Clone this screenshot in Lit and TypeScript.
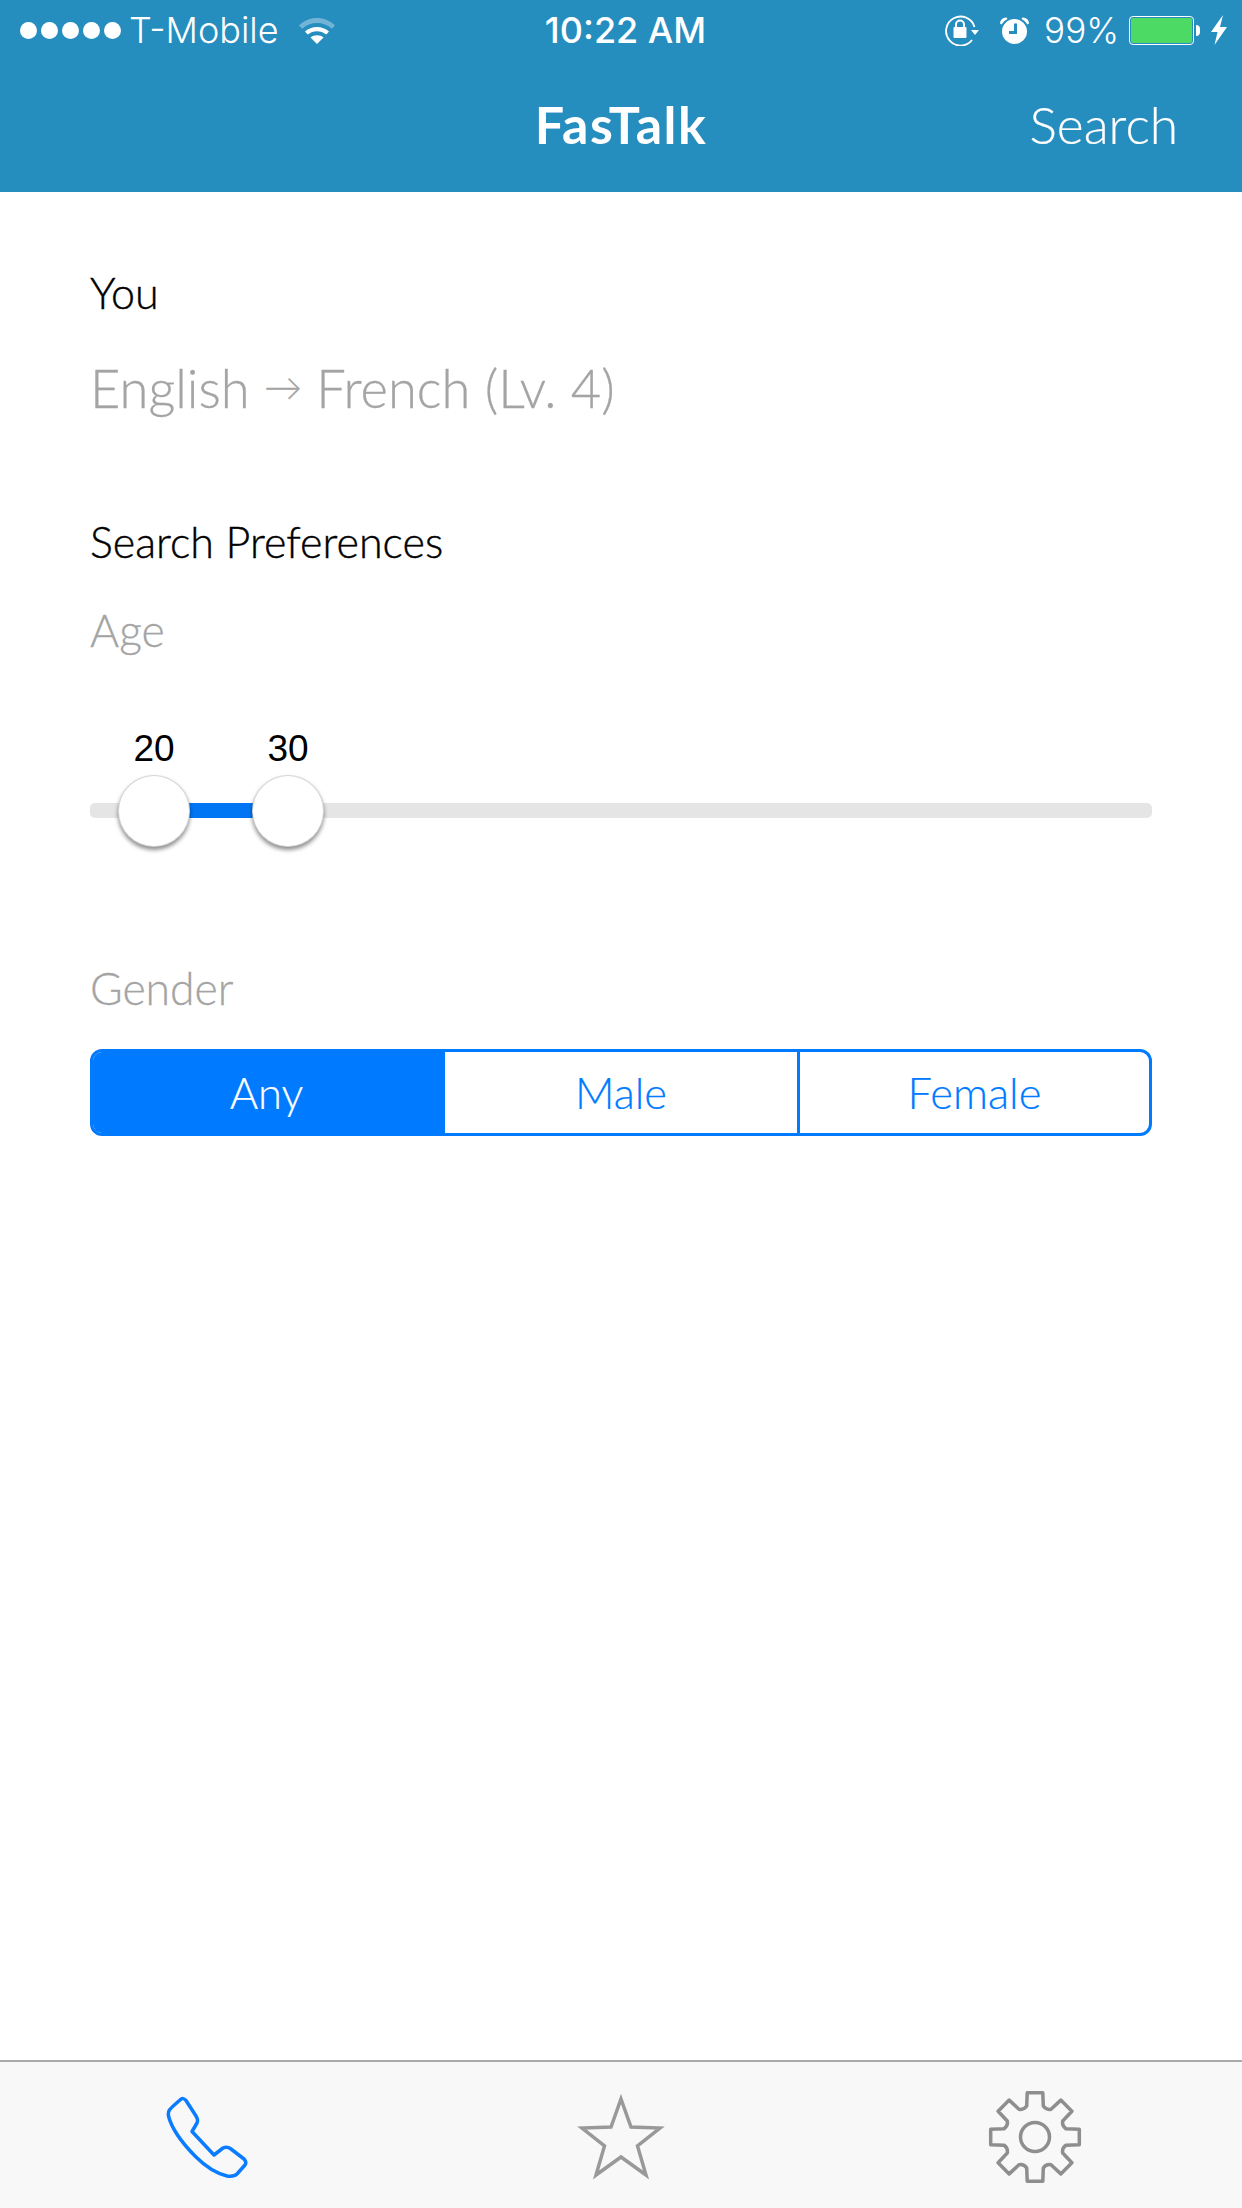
import { LitElement, css, html, svg } from 'lit';
import { customElement, state } from 'lit/decorators.js';
import { classMap } from 'lit/directives/class-map.js';

// gear outline, 8 teeth, in a 96x96 box
const gearPath = () => {
  const c = 48;
  const pt = (r: number, deg: number) => {
    const a = ((deg - 90) * Math.PI) / 180;
    return `${(c + r * Math.cos(a)).toFixed(1)} ${(c + r * Math.sin(a)).toFixed(1)}`;
  };
  let d = '';
  for (let i = 0; i < 8; i++) {
    const t = i * 45;
    d += `${i ? 'L' : 'M'}${pt(32, t - 15)} L${pt(45, t - 10)} L${pt(45, t + 10)} L${pt(32, t + 15)} Q${pt(29, t + 22.5)} ${pt(32, t + 30)} `;
  }
  return d + 'Z';
};

@customElement('status-bar')
export class StatusBar extends LitElement {
  static styles = css`
    :host {
      display: grid;
      grid-template-columns: 1fr auto 1fr;
      align-items: center;
      height: 60px;
      padding: 0 15px 0 20px;
      color: #fff;
      font-family: 'Inter', 'Liberation Sans', sans-serif;
      font-size: 36px;
      font-weight: 300;
    }
    .left,
    .right {
      display: flex;
      align-items: center;
    }
    .right {
      justify-content: flex-end;
    }
    .dots {
      display: flex;
      gap: 4px;
      margin-right: 8px;
    }
    .dots i {
      width: 17px;
      height: 17px;
      border-radius: 50%;
      background: #fff;
    }
    .wifi {
      margin-left: 19px;
    }
    .time {
      font-size: 36px;
      font-weight: 500;
      margin-left: 4px;
    }
    .pct {
      margin: 0 10px 0 14px;
      font-size: 35px;
    }
    .alarm {
      margin-left: 20px;
    }
    .battery {
      width: 65px;
      height: 29px;
      box-sizing: border-box;
      border: 1px solid #fff;
      border-radius: 4px;
      padding: 1px;
    }
    .battery div {
      height: 100%;
      border-radius: 2px;
      background: #4cd964;
    }
    .nub {
      width: 4px;
      height: 11px;
      margin: 0 11px 0 2px;
      border-radius: 0 4px 4px 0;
      background: #fff;
    }
  `;

  render() {
    return html`
      <div class="left">
        <div class="dots"><i></i><i></i><i></i><i></i><i></i></div>
        <span>T-Mobile</span>
        <svg class="wifi" width="38" height="28" viewBox="0 0 38 28">
          <path d="M1 9.500C10.500 -0.500 27.500 -0.500 37 9.500L33.800 12.800C26 5 12 5 4.200 12.800Z" fill="#fff" opacity="0.35" />
          <path d="M7 15.500C13.500 9.500 24.500 9.500 31 15.500L28.300 18.500C23 14 15 14 9.700 18.500Z" fill="#fff" />
          <path d="M19 28L12.500 21.500C16 18.500 22 18.500 25.500 21.500Z" fill="#fff" />
        </svg>
      </div>
      <span class="time">10:22 AM</span>
      <div class="right">
        <svg width="34" height="32" viewBox="0 0 34 32">
          <path d="M29.500 13A14.500 14.500 0 1 0 27 26" fill="none" stroke="#fff" stroke-width="1.800" />
          <path d="M26 16L34 16L30 21Z" fill="#fff" />
          <rect x="8.500" y="13" width="13" height="11" rx="1" fill="#fff" />
          <path d="M11 13V10.500A4 4 0 0 1 19 10.500V13" fill="none" stroke="#fff" stroke-width="2" />
        </svg>
        <svg class="alarm" width="31" height="28" viewBox="0 0 31 28">
          <circle cx="15.500" cy="15.500" r="12.500" fill="#fff" />
          <path d="M1 7.500A6 6 0 0 1 7.500 1.500L8.500 3A13 13 0 0 0 2.500 8.500Z" fill="#fff" />
          <path d="M30 7.500A6 6 0 0 0 23.500 1.500L22.500 3A13 13 0 0 1 28.500 8.500Z" fill="#fff" />
          <path d="M16.500 7.500V16.500H10" fill="none" stroke="#268dbf" stroke-width="3" />
        </svg>
        <span class="pct">99%</span>
        <div class="battery"><div></div></div>
        <div class="nub"></div>
        <svg width="16" height="30" viewBox="0 0 16 30">
          <path d="M12 0L0 17H6.500L3.500 30L16 12H9Z" fill="#fff" />
        </svg>
      </div>
    `;
  }
}

@customElement('age-slider')
export class AgeSlider extends LitElement {
  static styles = css`
    :host {
      display: block;
      position: relative;
      height: 143px;
      padding-top: 143px;
      box-sizing: border-box;
    }
    .track {
      position: relative;
      height: 15px;
      border-radius: 5px;
      background: #e5e5e5;
    }
    .fill {
      position: absolute;
      top: 0;
      bottom: 0;
      background: #0076f5;
    }
    .thumb {
      position: absolute;
      top: -28px;
      width: 72px;
      height: 72px;
      margin-left: -36px;
      box-sizing: border-box;
      border: 1px solid rgba(0, 0, 0, 0.16);
      border-radius: 50%;
      background: #fff;
      box-shadow: 0 3px 4px rgba(0, 0, 0, 0.45);
    }
    .value {
      position: absolute;
      top: -76px;
      width: 80px;
      margin-left: -40px;
      text-align: center;
      color: #000;
      font-family: 'Liberation Sans', sans-serif;
      font-size: 37px;
      line-height: 44px;
    }
  `;

  @state() private low = 20;
  @state() private high = 30;

  private pos(age: number) {
    return 64 + (age - 20) * 13.4;
  }

  render() {
    const left = this.pos(this.low);
    const right = this.pos(this.high);
    return html`
      <div class="track">
        <div class="fill" style="left:${left}px;width:${right - left}px"></div>
        ${[this.low, this.high].map(
          (age) => html`
            <span class="value" style="left:${this.pos(age)}px">${age}</span>
            <div class="thumb" style="left:${this.pos(age)}px"></div>
          `,
        )}
      </div>
    `;
  }
}

@customElement('app-root')
export class AppRoot extends LitElement {
  static styles = css`
    :host {
      display: flex;
      flex-direction: column;
      min-height: 100vh;
      background: #fff;
      font-family: 'Lato', 'DejaVu Sans', sans-serif;
    }
    header {
      height: 192px;
      background: #268dbf;
    }
    .nav {
      position: relative;
      display: flex;
      justify-content: flex-end;
      align-items: center;
      height: 132px;
      padding: 0 64px 4px;
      box-sizing: border-box;
      color: #fff;
    }
    .nav h1 {
      position: absolute;
      left: 0;
      right: 0;
      margin: 0;
      text-align: center;
      font-size: 52px;
      font-weight: 700;
      letter-spacing: 1.5px;
    }
    .nav span {
      font-size: 51.5px;
      font-weight: 300;
      -webkit-text-stroke: 0.2px #fff;
    }
    main {
      flex: 1;
      padding: 71px 90px 0;
    }
    .title {
      margin: 0;
      color: #000;
      font-size: 43px;
      font-weight: 300;
      line-height: 60px;
      -webkit-text-stroke: 0.4px #000;
    }
    .lang {
      margin: 30px 0 89px;
      color: #a4a4a4;
      font-size: 52.5px;
      font-weight: 300;
      line-height: 70px;
      -webkit-text-stroke: 0.3px #a4a4a4;
    }
    .arrow {
      font-size: 38px;
      line-height: 0;
      vertical-align: 7px;
    }
    .label {
      margin: 28px 0 0;
      color: #a4a4a4;
      font-size: 44.5px;
      font-weight: 300;
      line-height: 60px;
      -webkit-text-stroke: 0.3px #a4a4a4;
    }
    .gender {
      margin-top: 155px;
    }
    .segments {
      display: grid;
      grid-template-columns: repeat(3, 1fr);
      height: 87px;
      margin-top: 31px;
      box-sizing: border-box;
      border: 3px solid #007aff;
      border-radius: 12px;
      overflow: hidden;
    }
    .segment {
      display: flex;
      align-items: center;
      justify-content: center;
      padding-bottom: 2px;
      color: #007aff;
      font-size: 43.5px;
      font-weight: 300;
      -webkit-text-stroke: 0.2px currentColor;
    }
    .segment + .segment {
      border-left: 3px solid #007aff;
    }
    .segment.active + .segment {
      border-left: none;
    }
    .segment.active {
      padding-right: 5px;
      background: #007aff;
      color: #fff;
    }
    nav {
      display: grid;
      grid-template-columns: repeat(3, 1fr);
      align-items: center;
      justify-items: center;
      height: 148px;
      padding-top: 4px;
      box-sizing: border-box;
      border-top: 2px solid #aaa;
      background: #f8f8f8;
    }
    nav svg {
      filter: blur(0.6px);
    }
  `;

  @state() private gender = 'Any';

  private readonly genders = ['Any', 'Male', 'Female'];

  render() {
    return html`
      <header>
        <status-bar></status-bar>
        <div class="nav">
          <h1>FasTalk</h1>
          <span>Search</span>
        </div>
      </header>

      <main>
        <h2 class="title">You</h2>
        <p class="lang">English <span class="arrow">→</span> French (Lv. 4)</p>

        <h2 class="title">Search Preferences</h2>
        <p class="label">Age</p>
        <age-slider></age-slider>

        <p class="label gender">Gender</p>
        <div class="segments">
          ${this.genders.map(
            (g) => html`<div class=${classMap({ segment: true, active: g === this.gender })}>${g}</div>`,
          )}
        </div>
      </main>

      <nav>
        <svg width="84" height="84" viewBox="0 0 84 84">
          <path
            d="M15 5Q18 2 21 5.500L31 21Q33.500 25 32 28L27 36.500L49 60L58 53Q62 51 66 54L79 64Q82 67 80 70L72 79Q69 82 62 81C50 78 40 71 31 62C17 48 7 35 3.500 21C2.500 15 5 14 15 5Z"
            fill="none"
            stroke="#0a7cff"
            stroke-width="3.500"
            stroke-linejoin="round"
          />
        </svg>
        <svg width="88" height="88" viewBox="0 0 88 88">
          <path
            d="M44 6L54 34L83 35L60.500 53L69 82L44 64L19 82L27.500 53L5 35L34 34Z"
            fill="none"
            stroke="#999"
            stroke-width="3.500"
          />
        </svg>
        <svg width="96" height="96" viewBox="0 0 96 96">
          ${svg`<path d=${gearPath()} fill="none" stroke="#8e8e8e" stroke-width="3.500" stroke-linejoin="round" />`}
          <circle cx="48" cy="48" r="14.500" fill="none" stroke="#8e8e8e" stroke-width="3.500" />
        </svg>
      </nav>
    `;
  }
}
